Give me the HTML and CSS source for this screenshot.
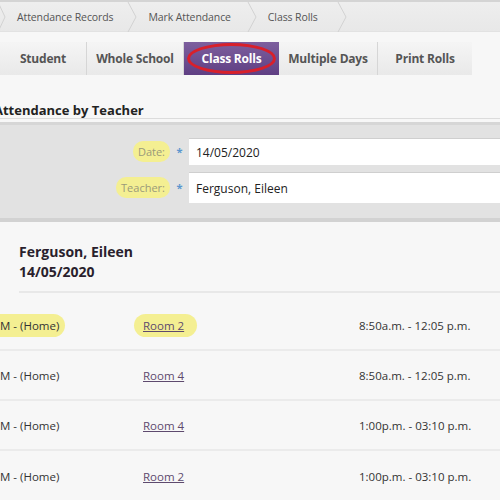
FILE: index.html
```html
<!DOCTYPE html>
<html>
<head>
<meta charset="utf-8">
<link rel="stylesheet" href="styles.css">
</head>
<body>
<div class="crumbs">
  <span class="sep lead"><svg width="8" height="30" viewBox="0 0 8 30"><path d="M0 0 L7 15 L0 30" fill="none" stroke="#d2d2d2" stroke-width="1"/></svg></span>
  <span class="crumb c1">Attendance Records</span>
  <span class="sep"><svg width="10" height="30" viewBox="0 0 10 30"><path d="M1 0 L9 15 L1 30" fill="none" stroke="#d2d2d2" stroke-width="1"/></svg></span>
  <span class="crumb c2">Mark Attendance</span>
  <span class="sep"><svg width="10" height="30" viewBox="0 0 10 30"><path d="M1 0 L9 15 L1 30" fill="none" stroke="#d2d2d2" stroke-width="1"/></svg></span>
  <span class="crumb c3">Class Rolls</span>
  <span class="sep"><svg width="10" height="30" viewBox="0 0 10 30"><path d="M1 0 L9 15 L1 30" fill="none" stroke="#d2d2d2" stroke-width="1"/></svg></span>
</div>

<div class="tabs">
  <div class="tab t-student">Student</div>
  <div class="tab t-whole">Whole School</div>
  <div class="tab t-class active">Class Rolls<span class="ring"></span></div>
  <div class="tab t-multi">Multiple Days</div>
  <div class="tab t-print">Print Rolls</div>
</div>

<h2 class="heading">Attendance by Teacher</h2>

<div class="panel">
  <div class="field">
    <div class="label"><span class="hl">Date:</span></div>
    <div class="req">*</div>
    <div class="input">14/05/2020</div>
  </div>
  <div class="field">
    <div class="label"><span class="hl">Teacher:</span></div>
    <div class="req">*</div>
    <div class="input">Ferguson, Eileen</div>
  </div>
</div>

<div class="summary">
  <div class="name">Ferguson, Eileen</div>
  <div class="name">14/05/2020</div>
</div>

<div class="rows">
  <div class="row">
    <div class="col1"><span class="hl hl-row1">M - (Home)</span></div>
    <div class="col2"><span class="hl hl-room"><a class="room">Room 2</a></span></div>
    <div class="col3">8:50a.m. - 12:05 p.m.</div>
  </div>
  <div class="row">
    <div class="col1">M - (Home)</div>
    <div class="col2"><a class="room">Room 4</a></div>
    <div class="col3">8:50a.m. - 12:05 p.m.</div>
  </div>
  <div class="row">
    <div class="col1">M - (Home)</div>
    <div class="col2"><a class="room">Room 4</a></div>
    <div class="col3">1:00p.m. - 03:10 p.m.</div>
  </div>
  <div class="row last">
    <div class="col1">M - (Home)</div>
    <div class="col2"><a class="room">Room 2</a></div>
    <div class="col3">1:00p.m. - 03:10 p.m.</div>
  </div>
</div>
</body>
</html>
```

FILE: styles.css
```css
* { box-sizing: border-box; }
html, body { margin: 0; padding: 0; }
body {
  width: 500px;
  height: 500px;
  overflow: hidden;
  background: #f7f7f7;
  font-family: "Open Sans", "Noto Sans", sans-serif;
  color: #333;
}

.crumbs {
  height: 32px;
  display: flex;
  align-items: center;
  background: linear-gradient(#eeeeee, #e8e8e8);
  border-top: 2px solid #d4d4d4;
  border-bottom: 1px solid #e2e2e2;
}
.sep { display: flex; align-items: center; height: 30px; }
.sep.lead { margin-left: -2px; }
.crumb {
  font-size: 10.5px;
  color: #555;
  letter-spacing: -0.1px;
}
.c1 { margin-left: 11px; margin-right: 14px; }
.c2 { margin-left: 11px; margin-right: 16px; }
.c3 { margin-left: 11px; margin-right: 19px; }

.tabs {
  margin-top: 10px;
  display: flex;
  height: 33px;
}
.tab {
  position: relative;
  display: flex;
  align-items: center;
  justify-content: center;
  font-size: 12px;
  font-weight: 700;
  color: #555;
  background: linear-gradient(#f5f5f5, #e9e9e9);
  border-right: 1px solid #d6d6d6;
  letter-spacing: -0.2px;
}
.t-student { width: 87px; }
.t-whole { width: 97px; }
.t-class { width: 95px; }
.t-multi { width: 99px; }
.t-print { width: 94px; border-right: none; }
.tab.active {
  background: linear-gradient(#7d5f9e, #5f3f83);
  color: #fff;
  border-right: none;
}
.ring {
  position: absolute;
  left: 3px;
  top: 1px;
  width: 89px;
  height: 31px;
  border: 3px solid #d8202b;
  border-radius: 50%;
}

.heading {
  margin: 0;
  padding: 26px 0 0 0;
  margin-left: -6px;
  font-size: 13px;
  font-weight: 700;
  color: #222;
  line-height: 18px;
  height: 44px;
  border-bottom: 1px solid #dcdcdc;
}

.panel {
  margin-top: 3px;
  background: #e2e2e2;
  border-top: 3px solid #d6d6d6;
  border-bottom: 4px solid #d2d2d2;
  padding: 13px 0 15px 0;
  display: flex;
  flex-direction: column;
  gap: 7px;
}
.field {
  display: flex;
  align-items: center;
}
.label {
  width: 170px;
  text-align: right;
  font-size: 11px;
  color: #9a9a7a;
}
.req {
  width: 19px;
  text-align: center;
  color: #5b97cf;
  font-size: 11px;
  font-weight: 700;
}
.input {
  flex: 1;
  height: 27px;
  background: #fff;
  border-top: 1px solid #cfcfcf;
  display: flex;
  align-items: center;
  padding-left: 7px;
  font-size: 12px;
  color: #222;
}
.field + .field .input { height: 31px; }

.hl {
  background: #f4ef92;
  border-radius: 10px;
  padding: 3px 5px;
}

.summary {
  margin-left: 19px;
  padding-top: 20px;
  padding-bottom: 9px;
  border-bottom: 2px solid #e8e8e8;
}
.name {
  font-size: 14px;
  font-weight: 700;
  color: #2a1f2d;
  line-height: 20px;
}

.rows {
  margin-top: 8px;
}
.row {
  height: 50px;
  display: flex;
  align-items: center;
  font-size: 11.5px;
  color: #333;
  border-bottom: 2px solid #ebebeb;
}
.row.last { border-bottom: none; }
.col1 { width: 143px; }
.hl-row1 { padding: 4px 6px 4px 0; border-radius: 0 12px 12px 0; }
.col2 { width: 216px; }
.hl-room { margin-left: -9px; padding: 4px 13px 4px 9px; border-radius: 12px; }
.room {
  color: #5e4a6e;
  text-decoration: underline;
}
.col3 { color: #333; }
```
